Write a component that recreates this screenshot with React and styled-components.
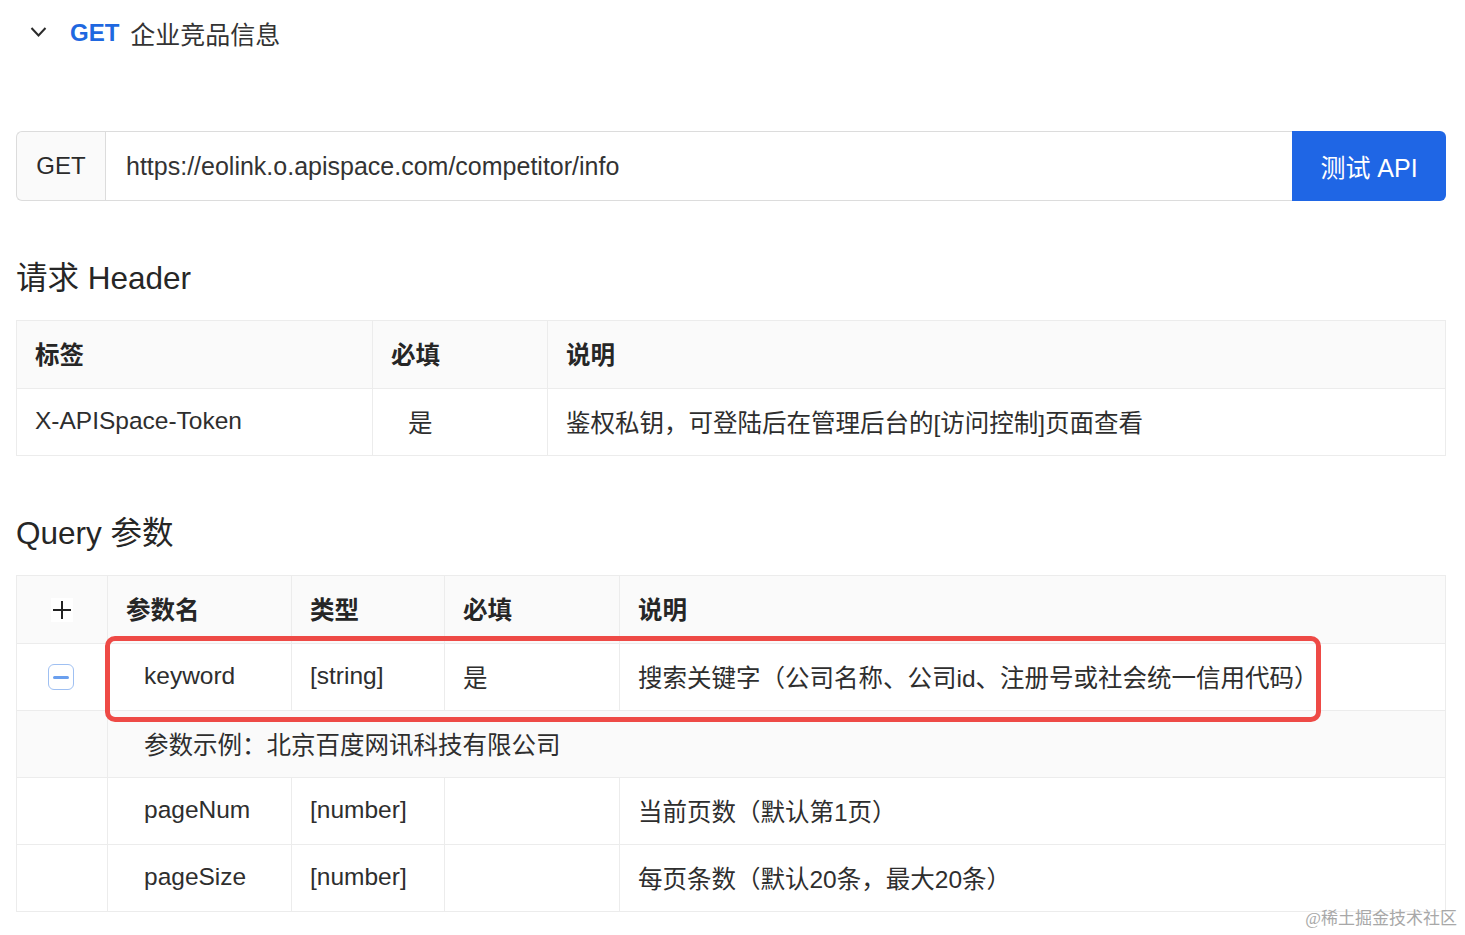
import styled, { createGlobalStyle } from "styled-components";

const GlobalStyle = createGlobalStyle`
  html, body {
    margin: 0;
    padding: 0;
    background: #ffffff;
  }
  body {
    font-family: "Liberation Sans", Arial, "Noto Sans CJK SC", sans-serif;
    color: #2b2b2b;
  }
`;

const Page = styled.div`
  position: relative;
  width: 1430px;
  height: 935px;
  padding: 0 19px 0 16px;
  overflow: hidden;
`;

const TitleBar = styled.div`
  height: 66px;
  display: flex;
  align-items: center;
  padding-left: 14px;
`;

const Chevron = styled.svg`
  width: 17px;
  height: 12px;
  margin-right: 23px;
  margin-top: -2px;
`;

const MethodTag = styled.span`
  font-size: 24px;
  font-weight: 700;
  color: #1f68e0;
  margin-right: 11px;
`;

const ApiName = styled.span`
  font-size: 25px;
  color: #333;
`;

const UrlBar = styled.div`
  margin-top: 65px;
  height: 70px;
  display: flex;
`;

const UrlMethod = styled.div`
  width: 88px;
  display: flex;
  align-items: center;
  justify-content: center;
  background: #fafafa;
  border: 1px solid #dcdcdc;
  border-right: none;
  border-radius: 6px 0 0 6px;
  font-size: 24px;
  color: #2b2b2b;
`;

const UrlInput = styled.div`
  flex: 1;
  display: flex;
  align-items: center;
  padding-left: 20px;
  border: 1px solid #dcdcdc;
  border-right: none;
  font-size: 25px;
  color: #333;
`;

const TestButton = styled.button`
  width: 154px;
  border: none;
  background: #1f66e5;
  color: #ffffff;
  font-family: inherit;
  font-size: 25px;
  border-radius: 0 6px 6px 0;
  cursor: pointer;
`;

const SectionTitle = styled.h2`
  margin: ${(p) => p.$top}px 0 22px;
  height: 40px;
  line-height: 40px;
  font-size: 31.5px;
  font-weight: 400;
  color: #262626;
`;

const TableWrap = styled.div`
  position: relative;
`;

const Table = styled.table`
  width: 100%;
  border-collapse: collapse;
  table-layout: fixed;
  font-size: 24.5px;
  color: #2e2e2e;
  border: 1px solid #ececec;
`;

const Th = styled.th`
  height: 65px;
  padding: 0 0 2px 18px;
  background: #fafafa;
  border: 1px solid #ececec;
  font-weight: 700;
  text-align: left;
  color: #262626;
`;

const Td = styled.td`
  height: 64px;
  padding: 0 0 2px ${(p) => p.$pad || 18}px;
  border: 1px solid #ececec;
  background: ${(p) => (p.$muted ? "#fafafa" : "#ffffff")};
  white-space: nowrap;
`;

const IconCell = styled.td`
  height: 64px;
  padding: 0 0 2px;
  border: 1px solid #ececec;
  background: ${(p) => (p.$muted ? "#fafafa" : "#ffffff")};
  text-align: center;
`;

const IconHead = styled.th`
  height: 65px;
  padding: 0 0 2px;
  background: #fafafa;
  border: 1px solid #ececec;
  text-align: center;
`;

const PlusBox = styled.span`
  display: inline-flex;
  width: 22px;
  height: 24px;
  align-items: center;
  justify-content: center;
  background: #ffffff;
  vertical-align: middle;
`;

const MinusBox = styled.span`
  display: inline-flex;
  width: 24px;
  height: 24px;
  align-items: center;
  justify-content: center;
  border: 1.5px solid #9fc0f2;
  border-radius: 6px;
  vertical-align: middle;
  margin-left: -2px;

  &::after {
    content: "";
    width: 16px;
    height: 3px;
    border-radius: 2px;
    background: #6a9fee;
  }
`;

const Highlight = styled.div`
  position: absolute;
  left: 89px;
  top: 61px;
  width: 1206px;
  height: 76px;
  border: 5px solid #ee4a46;
  border-radius: 10px;
  pointer-events: none;
`;

const Watermark = styled.div`
  position: absolute;
  right: 8px;
  bottom: 6px;
  font-family: "Liberation Serif", "Noto Sans CJK SC", serif;
  font-size: 17px;
  color: #a8a8a8;
`;

const queryRows = [
  { name: "pageNum", type: "[number]", required: "", desc: "当前页数（默认第1页）" },
  { name: "pageSize", type: "[number]", required: "", desc: "每页条数（默认20条，最大20条）" },
];

export default function App() {
  return (
    <>
      <GlobalStyle />
      <Page>
        <TitleBar>
          <Chevron viewBox="0 0 17 12">
            <path d="M1.5 2 L8.5 9.5 L15.5 2" fill="none" stroke="#2b2b2b" strokeWidth="2" />
          </Chevron>
          <MethodTag>GET</MethodTag>
          <ApiName>企业竞品信息</ApiName>
        </TitleBar>

        <UrlBar>
          <UrlMethod>GET</UrlMethod>
          <UrlInput>https://eolink.o.apispace.com/competitor/info</UrlInput>
          <TestButton>测试 API</TestButton>
        </UrlBar>

        <SectionTitle $top={57}>请求 Header</SectionTitle>
        <TableWrap>
          <Table>
            <colgroup>
              <col style={{ width: 356 }} />
              <col style={{ width: 175 }} />
              <col />
            </colgroup>
            <thead>
              <tr>
                <Th>标签</Th>
                <Th>必填</Th>
                <Th>说明</Th>
              </tr>
            </thead>
            <tbody>
              <tr>
                <Td>X-APISpace-Token</Td>
                <Td $pad={35}>是</Td>
                <Td>鉴权私钥，可登陆后在管理后台的[访问控制]页面查看</Td>
              </tr>
            </tbody>
          </Table>
        </TableWrap>

        <SectionTitle $top={57}>Query 参数</SectionTitle>
        <TableWrap>
          <Table>
            <colgroup>
              <col style={{ width: 91 }} />
              <col style={{ width: 184 }} />
              <col style={{ width: 153 }} />
              <col style={{ width: 175 }} />
              <col />
            </colgroup>
            <thead>
              <tr>
                <IconHead>
                  <PlusBox>
                    <svg width="20" height="20" viewBox="0 0 20 20">
                      <path d="M10 1 V19 M1 10 H19" stroke="#222" strokeWidth="2" />
                    </svg>
                  </PlusBox>
                </IconHead>
                <Th>参数名</Th>
                <Th>类型</Th>
                <Th>必填</Th>
                <Th>说明</Th>
              </tr>
            </thead>
            <tbody>
              <tr>
                <IconCell>
                  <MinusBox />
                </IconCell>
                <Td $pad={36}>keyword</Td>
                <Td>[string]</Td>
                <Td>是</Td>
                <Td>搜索关键字（公司名称、公司id、注册号或社会统一信用代码）</Td>
              </tr>
              <tr>
                <IconCell $muted />
                <Td $muted $pad={36} colSpan={4}>
                  参数示例：北京百度网讯科技有限公司
                </Td>
              </tr>
              {queryRows.map((row) => (
                <tr key={row.name}>
                  <IconCell />
                  <Td $pad={36}>{row.name}</Td>
                  <Td>{row.type}</Td>
                  <Td>{row.required}</Td>
                  <Td>{row.desc}</Td>
                </tr>
              ))}
            </tbody>
          </Table>
          <Highlight />
        </TableWrap>

        <Watermark>@稀土掘金技术社区</Watermark>
      </Page>
    </>
  );
}
